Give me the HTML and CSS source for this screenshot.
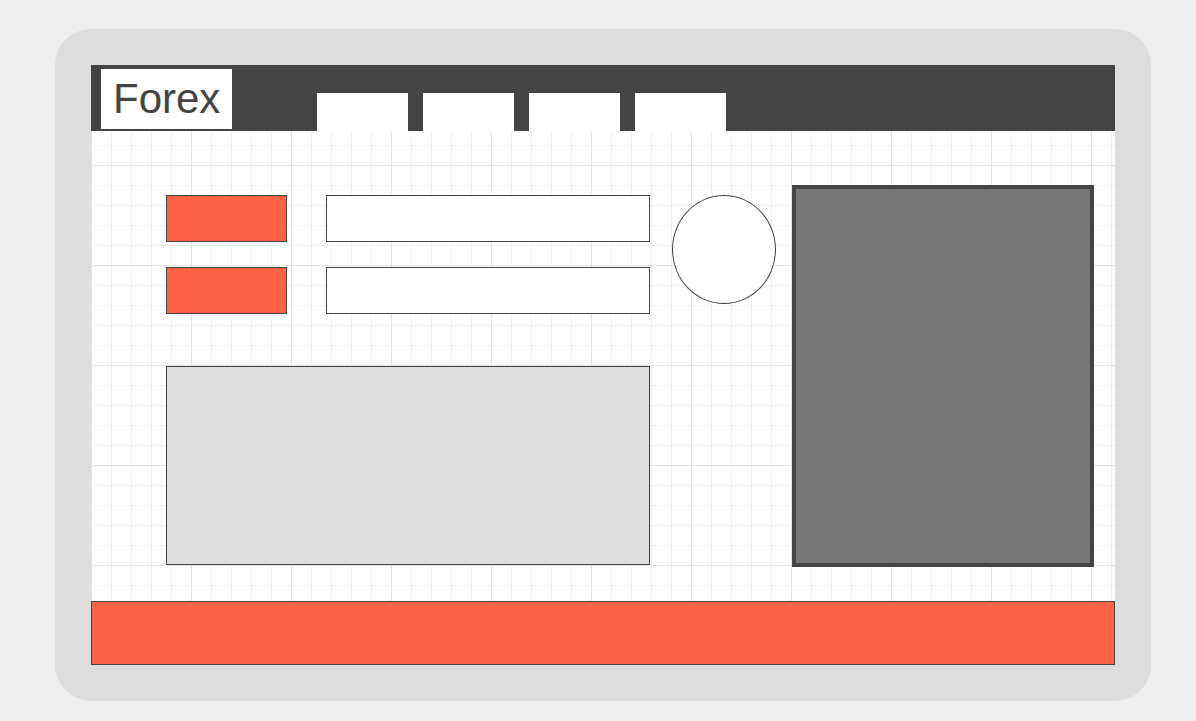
FILE: index.html
```html
<!DOCTYPE html>
<html lang="en">
<head>
    <meta charset="UTF-8">
    <meta name="viewport" content="width=device-width, initial-scale=1.0">
    <title>Forex</title>
    <link rel="stylesheet" href="styles.css">
</head>
<body>
    <div class="device">
        <div class="screen">
            <header class="topbar">
                <div class="logo">Forex</div>
                <nav class="tabs">
                    <div class="tab"></div>
                    <div class="tab"></div>
                    <div class="tab"></div>
                    <div class="tab"></div>
                </nav>
            </header>
            <main class="content">
                <div class="left">
                    <div class="form-row">
                        <div class="fields">
                            <div class="btn"></div>
                            <div class="input"></div>
                            <div class="btn"></div>
                            <div class="input"></div>
                        </div>
                        <div class="avatar"></div>
                    </div>
                    <div class="chart"></div>
                </div>
                <div class="panel"></div>
            </main>
            <footer class="footer"></footer>
        </div>
    </div>
</body>
</html>
```

FILE: styles.css
```css
body {
    margin: 0;
    background: #eeeeee;
    font-family: "Liberation Sans", Arial, sans-serif;
}

.device {
    margin: 29px 0 0 55px;
    width: 1096px;
    height: 672px;
    box-sizing: border-box;
    padding: 36px;
    background: #dddddd;
    border-radius: 36px;
}

.screen {
    width: 1024px;
    height: 600px;
    display: flex;
    flex-direction: column;
    background-color: #ffffff;
    background-image:
        linear-gradient(to right, #e3e3e3 1px, transparent 1px),
        linear-gradient(to bottom, #e3e3e3 1px, transparent 1px),
        linear-gradient(to right, #f0f0f0 1px, transparent 1px),
        linear-gradient(to bottom, #f0f0f0 1px, transparent 1px);
    background-size: 100px 100px, 100px 100px, 20px 20px, 20px 20px;
}

.topbar {
    height: 66px;
    flex-shrink: 0;
    background: #444444;
    display: flex;
    align-items: flex-end;
    box-sizing: border-box;
    padding-left: 10px;
}

.logo {
    align-self: flex-start;
    margin-top: 4px;
    width: 131px;
    height: 60px;
    box-sizing: border-box;
    padding-left: 12px;
    background: #ffffff;
    color: #444444;
    font-size: 42px;
    line-height: 60px;
}

.tabs {
    display: flex;
    gap: 15px;
    margin-left: 85px;
}

.tab {
    width: 91px;
    height: 38px;
    background: #ffffff;
}

.content {
    flex: 1;
    display: flex;
    padding: 54px 21px 0 75px;
}

.left {
    display: flex;
    flex-direction: column;
    padding-top: 10px;
}

.form-row {
    display: flex;
    align-items: flex-start;
}

.fields {
    display: grid;
    grid-template-columns: 121px 324px;
    grid-auto-rows: 47px;
    column-gap: 39px;
    row-gap: 25px;
}

.btn {
    background: #ff6347;
    border: 1px solid #444444;
}

.input {
    background: #ffffff;
    border: 1px solid #444444;
}

.avatar {
    margin-left: 22px;
    width: 104px;
    height: 109px;
    box-sizing: border-box;
    border: 1px solid #444444;
    border-radius: 50%;
    background: #ffffff;
}

.chart {
    margin-top: 52px;
    width: 484px;
    height: 199px;
    box-sizing: border-box;
    background: #dddddd;
    border: 1px solid #444444;
}

.panel {
    margin-left: auto;
    width: 302px;
    height: 382px;
    box-sizing: border-box;
    background: #777777;
    border: 4px solid #444444;
}

.footer {
    height: 64px;
    flex-shrink: 0;
    box-sizing: border-box;
    background: #ff6347;
    border: 1px solid #444444;
}
```
